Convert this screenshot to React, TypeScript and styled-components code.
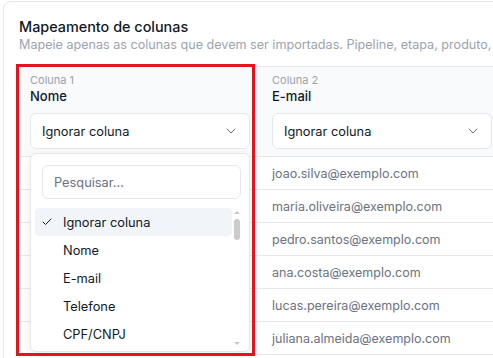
import styled, { createGlobalStyle } from "styled-components";
import { Check, ChevronDown } from "lucide-react";

const GlobalStyle = createGlobalStyle`
  html, body {
    margin: 0;
    padding: 0;
    overflow: hidden;
    background: #ffffff;
    font-family: Inter, "Noto Sans", sans-serif;
    color: #111827;
  }
  * { box-sizing: border-box; }
`;

const Page = styled.div`
  padding: 1px 0 0 3px;
`;

const Card = styled.section`
  width: 520px;
  height: 400px;
  border: 1px solid #e5e7eb;
  border-radius: 8px;
  padding: 15px 0 0 15px;
  background: #fff;
  overflow: hidden;
`;

const Title = styled.h2`
  margin: 0;
  font-size: 14.4px;
  line-height: 20px;
  font-weight: 500;
  color: #111827;
`;

const Subtitle = styled.p`
  margin: 0;
  font-size: 12.6px;
  line-height: 16px;
  color: #9ca3af;
  white-space: nowrap;
`;

const TableWrap = styled.div`
  position: relative;
  margin: 13px 0 0 -1px;
`;

const Table = styled.div`
  display: grid;
  grid-template-columns: 242px 244px;
  border-top: 1px solid #e5e7eb;
`;

const HeadCell = styled.div`
  background: #f9fafb;
  border-bottom: 1px solid #e5e7eb;
  padding: 6px 12px 7px 12px;
`;

const ColLabel = styled.div`
  font-size: 11px;
  line-height: 14px;
  color: #9ca3af;
`;

const ColName = styled.div`
  font-size: 13px;
  line-height: 18px;
  font-weight: 500;
  color: #111827;
  margin-bottom: 8px;
`;

const SelectBox = styled.div`
  width: 220px;
  height: 36px;
  display: flex;
  align-items: center;
  justify-content: space-between;
  padding: 0 10px 0 11px;
  border: 1px solid #e5e7eb;
  border-radius: 6px;
  background: #fff;
  font-size: 12.8px;
  color: #111827;

  svg {
    color: #6b7280;
  }
`;

const Cell = styled.div`
  height: 33px;
  display: flex;
  align-items: center;
  padding: 0 12px;
  border-bottom: 1px solid #e5e7eb;
  font-size: 12.5px;
  color: #6b7280;
  white-space: nowrap;
`;

const Popover = styled.div`
  position: absolute;
  top: 87px;
  left: 12px;
  width: 220px;
  height: 199px;
  background: #fff;
  border: 1px solid #e5e7eb;
  border-radius: 6px;
  box-shadow: 0 4px 12px rgba(15, 23, 42, 0.08);
  overflow: hidden;
  padding: 11px 8px 0 11px;
`;

const SearchInput = styled.input`
  width: 199px;
  height: 34px;
  border: 1px solid #e5e7eb;
  border-radius: 6px;
  padding: 0 11px;
  font-family: Inter, "Noto Sans", sans-serif;
  font-size: 12.8px;
  color: #111827;
  outline: none;

  &::placeholder {
    color: #6b7280;
  }
`;

const ListArea = styled.div`
  display: flex;
  margin: 9px 0 0 -7px;
  height: 143px;
`;

const Options = styled.ul`
  list-style: none;
  margin: 0;
  padding: 0;
  width: 203px;
  overflow: hidden;
`;

const Option = styled.li<{ $active?: boolean }>`
  height: 28px;
  flex-shrink: 0;
  display: flex;
  align-items: center;
  border-radius: 4px;
  font-size: 12.8px;
  color: #111827;
  background: ${(p) => (p.$active ? "#f1f5f9" : "transparent")};
`;

const CheckSlot = styled.span`
  width: 28px;
  padding-left: 6px;
  display: flex;
  align-items: center;
  color: #111827;
`;

const ScrollTrack = styled.div`
  width: 8px;
  margin-left: 1px;
  display: flex;
  flex-direction: column;
  align-items: center;
`;

const Arrow = styled.span<{ $down?: boolean }>`
  width: 0;
  height: 0;
  border-left: 3px solid transparent;
  border-right: 3px solid transparent;
  ${(p) =>
    p.$down
      ? "border-top: 3px solid #c7c7c7; margin-bottom: 6px;"
      : "border-bottom: 3px solid #c7c7c7; margin-top: 3px;"}
`;

const Thumb = styled.span`
  width: 6px;
  height: 21px;
  margin-top: 5px;
  border-radius: 3px;
  background: #cbcbcb;
`;

const Spacer = styled.span`
  flex: 1;
`;

const Highlight = styled.div`
  position: absolute;
  left: -2px;
  top: -2px;
  width: 239px;
  height: 292px;
  border: 3px solid #e3141c;
  pointer-events: none;
`;

const emails = [
  "joao.silva@exemplo.com",
  "maria.oliveira@exemplo.com",
  "pedro.santos@exemplo.com",
  "ana.costa@exemplo.com",
  "lucas.pereira@exemplo.com",
  "juliana.almeida@exemplo.com",
];

const columns = [
  { label: "Coluna 1", name: "Nome" },
  { label: "Coluna 2", name: "E-mail" },
];

const options = ["Ignorar coluna", "Nome", "E-mail", "Telefone", "CPF/CNPJ"];

export default function App() {
  return (
    <>
      <GlobalStyle />
      <Page>
        <Card>
          <Title>Mapeamento de colunas</Title>
          <Subtitle>
            Mapeie apenas as colunas que devem ser importadas. Pipeline, etapa, produto, S
          </Subtitle>
          <TableWrap>
            <Table>
              {columns.map((c) => (
                <HeadCell key={c.label}>
                  <ColLabel>{c.label}</ColLabel>
                  <ColName>{c.name}</ColName>
                  <SelectBox>
                    <span>Ignorar coluna</span>
                    <ChevronDown size={16} strokeWidth={1.5} />
                  </SelectBox>
                </HeadCell>
              ))}
              {emails.map((e) => [
                <Cell key={e + "-name"} />,
                <Cell key={e}>{e}</Cell>,
              ])}
            </Table>

            <Popover>
              <SearchInput placeholder="Pesquisar..." />
              <ListArea>
                <Options>
                  {options.map((o, i) => (
                    <Option key={o} $active={i === 0}>
                      <CheckSlot>{i === 0 && <Check size={12} strokeWidth={2} />}</CheckSlot>
                      {o}
                    </Option>
                  ))}
                </Options>
                <ScrollTrack>
                  <Arrow />
                  <Thumb />
                  <Spacer />
                  <Arrow $down />
                </ScrollTrack>
              </ListArea>
            </Popover>

            <Highlight />
          </TableWrap>
        </Card>
      </Page>
    </>
  );
}
